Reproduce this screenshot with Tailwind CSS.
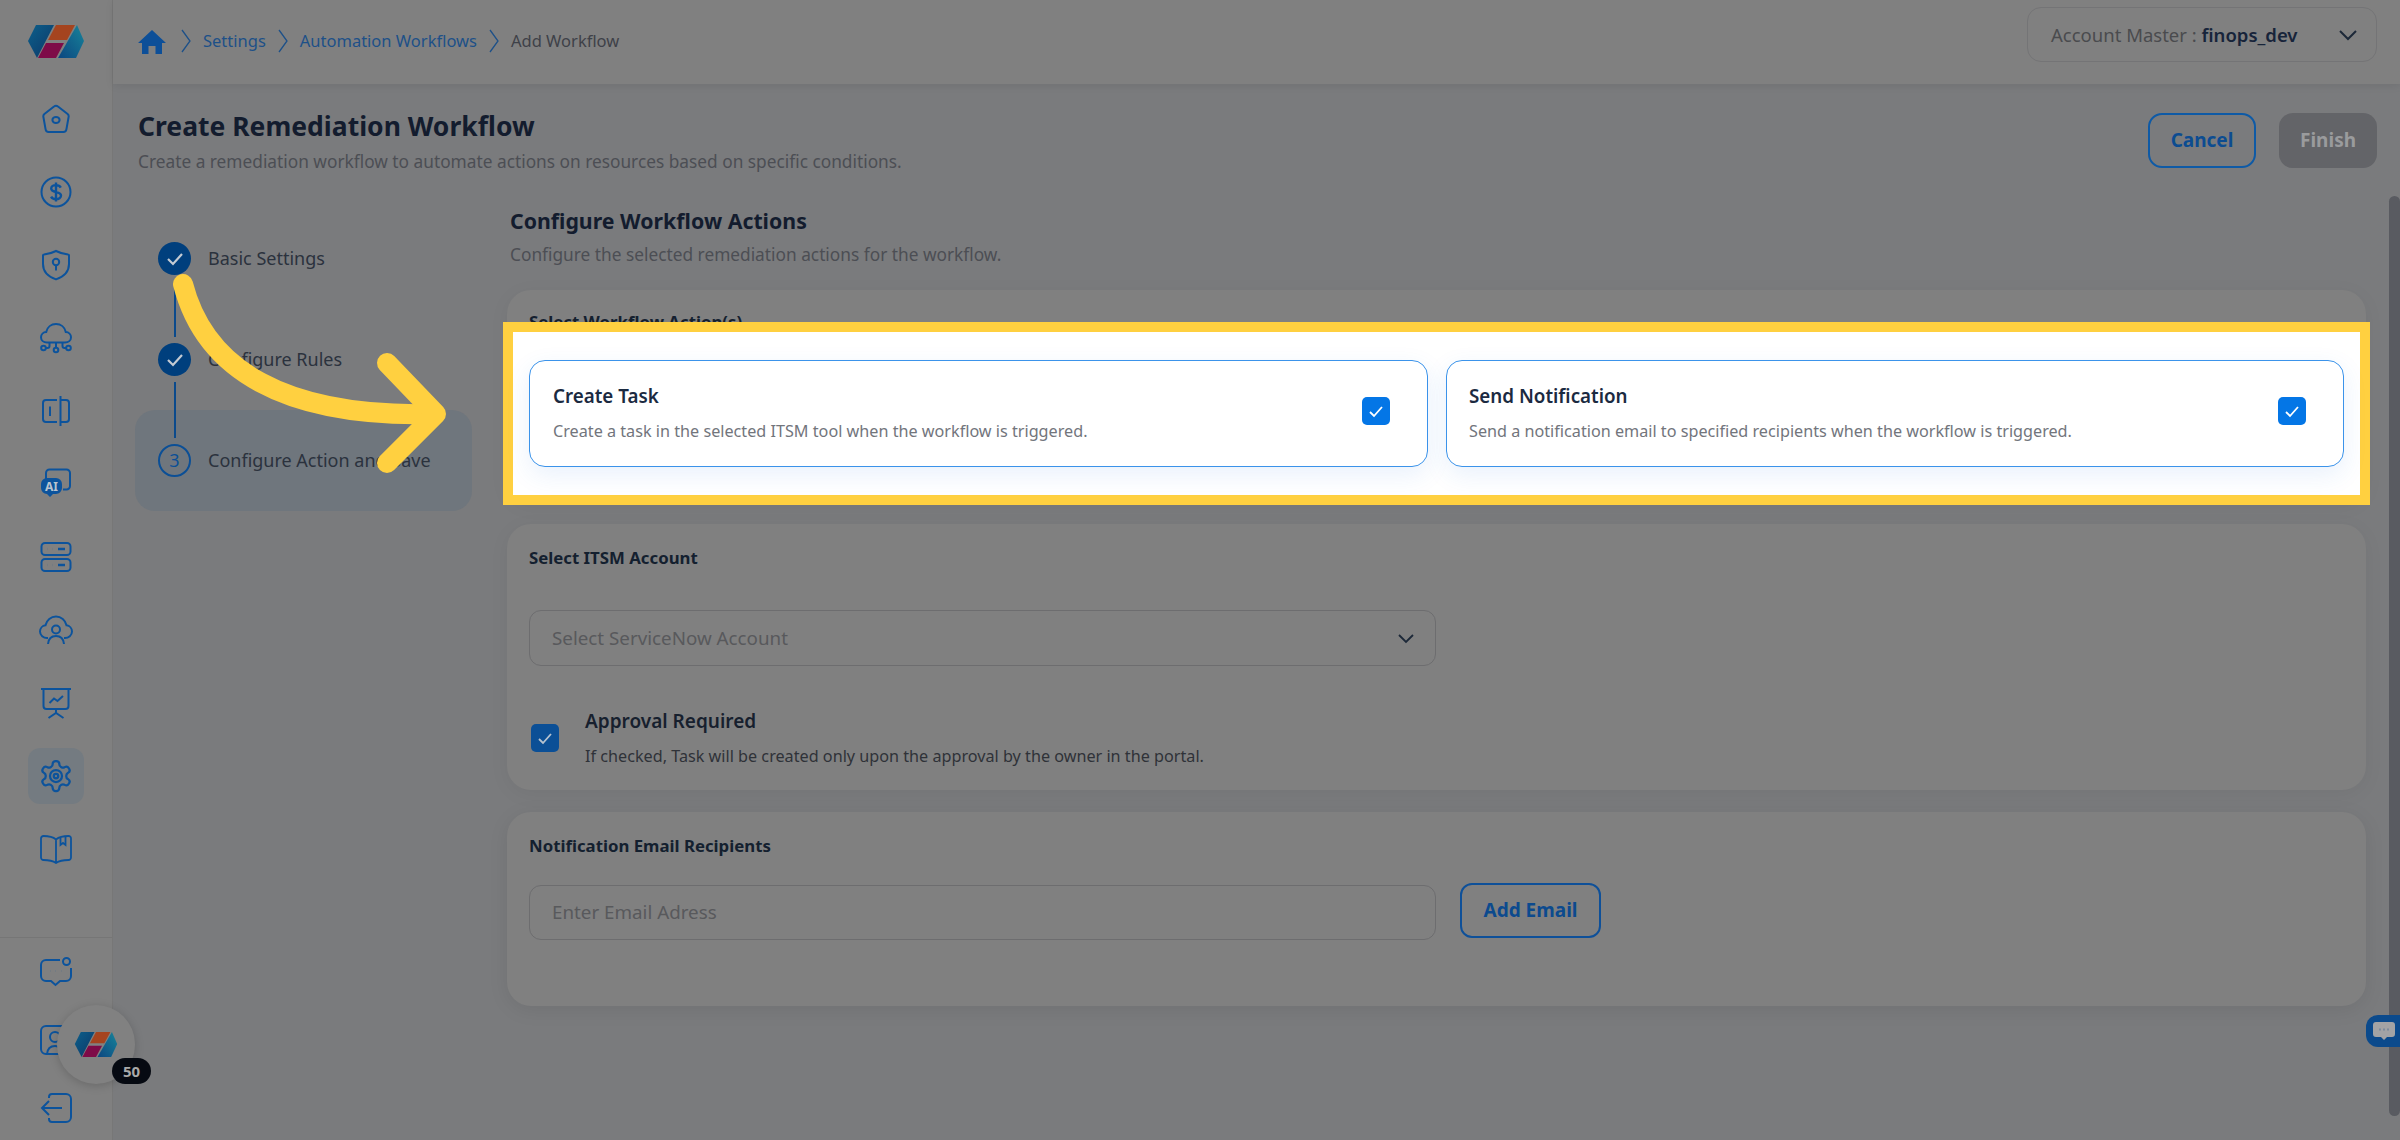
<!DOCTYPE html>
<html lang="en">
<head>
    <meta charset="UTF-8" />
    <title>Create Remediation Workflow</title>
    <script src="https://cdn.jsdelivr.net/npm/@tailwindcss/browser@4"></script>
</head>
<body class="relative flex w-[2400px] h-[1140px] overflow-hidden bg-[#7a7b7d] font-['Noto_Sans',sans-serif] text-[#14202f]">

<!-- Sidebar -->
<aside class="w-[113px] h-[1140px] flex flex-col shrink-0 bg-[#808080] overflow-hidden border-r border-[#777]">
    <div class="h-[82px] shrink-0 flex items-center justify-center">
        <svg class="w-[56px] h-[33px]" viewBox="0 0 56 33">
            <defs>
                <linearGradient id="lg1" x1="0" y1="0" x2="1" y2="1"><stop offset="0" stop-color="#0d5f8a"/><stop offset="1" stop-color="#0b3768"/></linearGradient>
                <linearGradient id="lg2" x1="1" y1="0" x2="0" y2="1"><stop offset="0" stop-color="#17849a"/><stop offset="1" stop-color="#0c4680"/></linearGradient>
            </defs>
            <polygon points="0,16 8,0 26,0 9,33" fill="url(#lg1)"/>
            <polygon points="28,0 47,0 39,15 20,15" fill="#a5441f"/>
            <polygon points="18,18 36,18 28,33 10,33" fill="#7e0b48"/>
            <polygon points="49,0 56,16 48,33 30,33" fill="url(#lg2)"/>
        </svg>
    </div>
    <nav class="flex flex-col text-[#0c539c]">
        <a class="h-[73px] flex items-center justify-center">
            <svg class="w-[32px] h-[32px] mt-[2px]" viewBox="0 0 32 32" fill="none" stroke="currentColor" stroke-width="2"><path d="M14 2.600a3 3 0 0 1 4 0l9.600 7.400a3 3 0 0 1 1 3l-2.200 12.400a3 3 0 0 1-3 2.600H8.600a3 3 0 0 1-3-2.600L3.400 13a3 3 0 0 1 1-3z"/><ellipse cx="16" cy="16" rx="3.600" ry="3"/></svg>
        </a>
        <a class="h-[73px] flex items-center justify-center">
            <svg class="w-[32px] h-[32px]" viewBox="0 0 32 32" fill="none" stroke="currentColor" stroke-width="2"><circle cx="16" cy="16" r="14.500"/><path stroke-width="2.400" d="M20.800 11.600c-.8-1.600-2.600-2.500-4.800-2.500-2.700 0-4.800 1.400-4.800 3.500 0 4.900 9.800 2.100 9.800 7 0 2.100-2.200 3.500-5 3.500-2.200 0-4.100-.9-4.900-2.500M16 6.400v19.200"/></svg>
        </a>
        <a class="h-[73px] flex items-center justify-center">
            <svg class="w-[32px] h-[32px]" viewBox="0 0 32 32" fill="none" stroke="currentColor" stroke-width="2"><path d="M16 2c3.800 2 7.800 3 12 3.400a1 1 0 0 1 1 1V15c0 7.600-5.400 12.800-13 15.400C8.400 27.800 3 22.600 3 15V6.400a1 1 0 0 1 1-1C8.200 5 12.200 4 16 2z"/><circle cx="16" cy="13" r="3.200"/><path d="M16 16.200v5.300"/></svg>
        </a>
        <a class="h-[73px] flex items-center justify-center">
            <svg class="w-[34px] h-[32px]" viewBox="0 0 34 32" fill="none" stroke="currentColor" stroke-width="2"><path d="M8 20.500c-3.400 0-6-2.300-6-5.300 0-2.800 2.300-5 5.200-5.200C8.200 5.200 12.200 2 17 2s8.800 3.200 9.800 8c2.900.2 5.200 2.400 5.200 5.200 0 3-2.600 5.300-6 5.300z"/><path d="M17 20.500v5M10.500 20.500v3.500a2 2 0 0 1-2 2H7M23.500 20.500v3.500a2 2 0 0 0 2 2H27"/><circle cx="17" cy="28" r="2.300"/><circle cx="4.500" cy="26" r="2.300"/><circle cx="29.500" cy="26" r="2.300"/></svg>
        </a>
        <a class="h-[73px] flex items-center justify-center">
            <svg class="w-[32px] h-[32px]" viewBox="0 0 32 32" fill="none" stroke="currentColor" stroke-width="2"><path d="M20.500 1v30"/><path d="M17 5H6a3 3 0 0 0-3 3v16a3 3 0 0 0 3 3h11M20.500 5H26a3 3 0 0 1 3 3v16a3 3 0 0 1-3 3h-5.500"/><path d="M10 11.500v9.500"/></svg>
        </a>
        <a class="h-[73px] flex items-center justify-center">
            <svg class="w-[32px] h-[32px]" viewBox="0 0 32 32" fill="none"><path stroke="currentColor" stroke-width="2" d="M6 11V5a3.500 3.500 0 0 1 3.500-3.500h17A3.500 3.500 0 0 1 30 5v13a3.500 3.500 0 0 1-3.500 3.500H23"/><path fill="currentColor" d="M7 10h9a6 6 0 0 1 6 6v4a6 6 0 0 1-6 6h-3l-3 3-3-3H7a6 6 0 0 1-6-6v-4a6 6 0 0 1 6-6z"/><text x="11.500" y="22.800" text-anchor="middle" font-size="12" font-weight="700" fill="#b9c4cf">AI</text></svg>
        </a>
        <a class="h-[73px] flex items-center justify-center">
            <svg class="w-[32px] h-[32px]" viewBox="0 0 32 32" fill="none" stroke="currentColor" stroke-width="2"><rect x="1.500" y="2" width="29" height="12" rx="3.500"/><rect x="1.500" y="18" width="29" height="12" rx="3.500"/><path stroke-width="2.400" d="M7 8h.1M12 8h.1M18 8h7M7 24h.1M12 24h.1M18 24h7"/></svg>
        </a>
        <a class="h-[73px] flex items-center justify-center">
            <svg class="w-[34px] h-[30px]" viewBox="0 0 34 30" fill="none" stroke="currentColor" stroke-width="2"><path d="M9 23H8c-3.500 0-7-2.700-7-6.500 0-3.300 2.500-5.800 5.500-6.200C7.500 5 12 1.500 17 1.500S26.500 5 27.500 10.300c3 .4 5.500 2.900 5.500 6.200 0 3.800-3.500 6.500-7 6.500h-1"/><circle cx="17" cy="14.500" r="4"/><path d="M9 29c.5-5 3.500-8 8-8s7.500 3 8 8"/></svg>
        </a>
        <a class="h-[73px] flex items-center justify-center">
            <svg class="w-[32px] h-[32px]" viewBox="0 0 32 32" fill="none" stroke="currentColor" stroke-width="2"><path d="M1 2h30M3.500 2v17a3 3 0 0 0 3 3h19a3 3 0 0 0 3-3V2"/><path d="M9.500 16l4.500-4.500 3.500 2.500 5.500-5"/><path d="M16 22v4M8.500 31l7.500-5 7.500 5"/></svg>
        </a>
        <a class="h-[73px] flex items-center justify-center">
            <div class="w-[56px] h-[56px] rounded-[12px] bg-[#747b81] flex items-center justify-center">
                <svg class="w-[36px] h-[36px]" viewBox="0 0 24 24" fill="none" stroke="currentColor" stroke-width="1.500"><path d="M12.220 2h-.44a2 2 0 0 0-2 2v.18a2 2 0 0 1-1 1.730l-.43.25a2 2 0 0 1-2 0l-.15-.08a2 2 0 0 0-2.730.73l-.22.38a2 2 0 0 0 .73 2.730l.15.1a2 2 0 0 1 1 1.720v.51a2 2 0 0 1-1 1.740l-.15.09a2 2 0 0 0-.73 2.730l.22.38a2 2 0 0 0 2.730.73l.15-.08a2 2 0 0 1 2 0l.43.25a2 2 0 0 1 1 1.730V20a2 2 0 0 0 2 2h.44a2 2 0 0 0 2-2v-.18a2 2 0 0 1 1-1.730l.43-.25a2 2 0 0 1 2 0l.15.08a2 2 0 0 0 2.730-.73l.22-.39a2 2 0 0 0-.73-2.730l-.15-.08a2 2 0 0 1-1-1.740v-.5a2 2 0 0 1 1-1.740l.15-.09a2 2 0 0 0 .73-2.730l-.22-.38a2 2 0 0 0-2.730-.73l-.15.08a2 2 0 0 1-2 0l-.43-.25a2 2 0 0 1-1-1.730V4a2 2 0 0 0-2-2z"/><circle cx="12" cy="12" r="4"/><circle cx="12" cy="12" r="1.500"/></svg>
            </div>
        </a>
        <a class="h-[73px] flex items-center justify-center">
            <svg class="w-[32px] h-[30px]" viewBox="0 0 32 30" fill="none" stroke="currentColor" stroke-width="1.800"><path d="M16 5.500C13 3 8 2 3.500 2A2.500 2.500 0 0 0 1 4.500v19A2.500 2.500 0 0 0 3.500 26c4.500 0 9.500 1 12.500 3 3-2 8-3 12.500-3a2.500 2.500 0 0 0 2.500-2.500v-19A2.500 2.500 0 0 0 28.500 2C24 2 19 3 16 5.500zM16 5.500V29"/><path d="M20.500 3.500V11l2.500-2 2.500 2V2.500"/></svg>
        </a>
    </nav>
    <div class="mt-[52px] border-t border-[#767676] flex flex-col text-[#0c539c]">
        <a class="h-[68px] flex items-center justify-center">
            <svg class="w-[32px] h-[30px]" viewBox="0 0 32 30" fill="none" stroke="currentColor" stroke-width="2"><path d="M20 3H6a5 5 0 0 0-5 5v11a5 5 0 0 0 5 5h5l4.500 4 4.500-4h6a5 5 0 0 0 5-5v-8"/><circle cx="26.500" cy="4.500" r="3.500"/><path d="M10 14h.1M15.500 14h.1M21 14h.1"/></svg>
        </a>
        <a class="h-[68px] flex items-center justify-center">
            <svg class="w-[32px] h-[30px]" viewBox="0 0 32 30" fill="none" stroke="currentColor" stroke-width="2"><path d="M27 1H6a5 5 0 0 0-5 5v18a5 5 0 0 0 5 5h21"/><circle cx="15" cy="12" r="5"/><path d="M7 29c.5-5 3.500-8 8-8s7.500 3 8 8"/></svg>
        </a>
        <a class="h-[68px] flex items-center justify-center">
            <svg class="w-[32px] h-[30px]" viewBox="0 0 32 30" fill="none" stroke="currentColor" stroke-width="2"><path d="M9 5V4a3 3 0 0 1 3-3h14a5 5 0 0 1 5 5v18a5 5 0 0 1-5 5H12a3 3 0 0 1-3-3v-1"/><path d="M22 15H2M9 8l-7 7 7 7"/></svg>
        </a>
    </div>
</aside>

<!-- Main -->
<main class="flex-1 flex flex-col min-w-0">
    <header class="h-[84px] shrink-0 bg-[#808080] shadow-[0_2px_8px_rgba(0,0,0,0.08)] flex items-center justify-between pl-[25px] pr-[23px]">
        <div class="flex items-center mb-[2px] text-[16.500px] text-[#1d5088]">
            <svg class="w-[28px] h-[24px] mr-[14px] mt-[2px]" viewBox="0 0 28 24" fill="#0d4f98"><path d="M14 0 28 13h-4v11h-6.500v-8h-7v8H4V13H0z"/></svg>
            <svg class="w-[12px] h-[24px] mr-[11px]" viewBox="0 0 12 24" fill="none" stroke="#1d5088" stroke-width="1.300"><path d="M2 1l8 11-8 11"/></svg>
            <span>Settings</span>
            <svg class="w-[12px] h-[24px] mx-[11px]" viewBox="0 0 12 24" fill="none" stroke="#1d5088" stroke-width="1.300"><path d="M2 1l8 11-8 11"/></svg>
            <span>Automation Workflows</span>
            <svg class="w-[12px] h-[24px] mx-[11px]" viewBox="0 0 12 24" fill="none" stroke="#1d5088" stroke-width="1.300"><path d="M2 1l8 11-8 11"/></svg>
            <span class="text-[#3e4148]">Add Workflow</span>
        </div>
        <div class="w-[350px] h-[55px] mb-[13px] mt-[-2px] rounded-[14px] border border-[#747476] flex items-center justify-between pl-[23px] pr-[18px] text-[18.500px]">
            <div class="text-[#4a4b4e]">Account Master : <span class="font-semibold text-[#17243a]">finops_dev</span></div>
            <svg class="w-[20px] h-[12px]" viewBox="0 0 20 12" fill="none" stroke="#1c2838" stroke-width="2"><path d="M2 2l8 8 8-8"/></svg>
        </div>
    </header>

    <div class="flex items-start justify-between pl-[25px] pr-[23px] pt-[25px] h-[90px] shrink-0">
        <div>
            <h1 class="text-[26.500px] leading-[34px] font-bold text-[#131c2e]">Create Remediation Workflow</h1>
            <p class="mt-[7px] text-[17.300px] leading-[24px] text-[#4c4e54]">Create a remediation workflow to automate actions on resources based on specific conditions.</p>
        </div>
        <div class="flex gap-[23px] mt-[4px]">
            <button class="w-[108px] h-[55px] rounded-[14px] border-2 border-[#0e5aa6] text-[19px] font-bold text-[#0c4c91]">Cancel</button>
            <button class="w-[98px] h-[55px] rounded-[14px] bg-[#636468] text-[19px] font-bold text-[#9a9b9d]">Finish</button>
        </div>
    </div>

    <div class="flex items-start gap-[35px] pl-[22px] pr-[34px] pt-[33px]">
        <!-- Stepper -->
        <div class="w-[337px] shrink-0 mt-[1px] text-[18px] text-[#2b323d]">
            <div class="relative h-[101px] flex items-center gap-[17px] pl-[23px]">
                <div class="w-[33px] h-[33px] rounded-full bg-[#003f7d] flex items-center justify-center">
                    <svg class="w-[18px] h-[14px]" viewBox="0 0 18 14" fill="none" stroke="#c4cbd3" stroke-width="2.200"><path d="M2 7l5 5 9-10"/></svg>
                </div>
                <span>Basic Settings</span>
                <div class="absolute left-[39px] top-[71px] w-[2px] h-[58px] bg-[#0b4a8c]"></div>
            </div>
            <div class="relative h-[101px] flex items-center gap-[17px] pl-[23px]">
                <div class="w-[33px] h-[33px] rounded-full bg-[#003f7d] flex items-center justify-center">
                    <svg class="w-[18px] h-[14px]" viewBox="0 0 18 14" fill="none" stroke="#c4cbd3" stroke-width="2.200"><path d="M2 7l5 5 9-10"/></svg>
                </div>
                <span>Configure Rules</span>
                <div class="absolute left-[39px] top-[73px] w-[2px] h-[56px] bg-[#0b4a8c]"></div>
            </div>
            <div class="h-[101px] flex items-center gap-[17px] pl-[23px] rounded-[20px] bg-[#6f767d]">
                <div class="w-[33px] h-[33px] rounded-full border-2 border-[#0b4f96] flex items-center justify-center text-[#0b4f96] text-[18px]">3</div>
                <span>Configure Action and Save</span>
            </div>
        </div>

        <!-- Panels -->
        <div class="flex-1 min-w-0">
            <h2 class="pl-[3px] text-[21.300px] leading-[28px] font-bold text-[#131c2e]">Configure Workflow Actions</h2>
            <p class="pl-[3px] mt-[8px] text-[17.300px] leading-[24px] text-[#4c4e54]">Configure the selected remediation actions for the workflow.</p>

            <section class="mt-[23px] h-[212px] rounded-[24px] bg-[#808080] pl-[22px] pt-[21px] shadow-[0_4px_20px_rgba(0,0,0,0.05)]">
                <h3 class="text-[16.800px] leading-[22px] font-bold">Select Workflow Action(s)</h3>
            </section>

            <section class="mt-[22px] h-[266px] rounded-[24px] bg-[#808080] pl-[22px] pt-[23px] shadow-[0_4px_20px_rgba(0,0,0,0.05)]">
                <h3 class="text-[16.800px] leading-[22px] font-bold">Select ITSM Account</h3>
                <div class="mt-[41px] w-[907px] h-[56px] rounded-[12px] border border-[#6d6d6f] flex items-center justify-between pl-[22px] pr-[20px] text-[18.800px] text-[#58595c]">
                    <span>Select ServiceNow Account</span>
                    <svg class="w-[18px] h-[11px]" viewBox="0 0 18 11" fill="none" stroke="#1c2838" stroke-width="1.800"><path d="M2 2l7 7 7-7"/></svg>
                </div>
                <div class="mt-[43px] ml-[2px] flex items-start gap-[26px]">
                    <div class="mt-[15px] w-[28px] h-[28px] rounded-[5px] bg-[#0b4f96] flex items-center justify-center">
                        <svg class="w-[16px] h-[13px]" viewBox="0 0 16 13" fill="none" stroke="#b7c3cf" stroke-width="1.800"><path d="M2 7l4 4 8-9"/></svg>
                    </div>
                    <div>
                        <div class="text-[19px] leading-[24px] font-semibold text-[#17202e]">Approval Required</div>
                        <div class="mt-[11px] text-[16.200px] leading-[24px] text-[#2f3238]">If checked, Task will be created only upon the approval by the owner in the portal.</div>
                    </div>
                </div>
            </section>

            <section class="mt-[22px] h-[194px] rounded-[24px] bg-[#808080] pl-[22px] pt-[23px] shadow-[0_4px_20px_rgba(0,0,0,0.08)]">
                <h3 class="text-[16.800px] leading-[22px] font-bold">Notification Email Recipients</h3>
                <div class="mt-[26px] flex items-start gap-[24px]">
                    <div class="mt-[2px] w-[907px] h-[55px] rounded-[12px] border border-[#6d6d6f] flex items-center pl-[22px] text-[18.800px] text-[#58595c]">Enter Email Adress</div>
                    <button class="w-[141px] h-[55px] rounded-[12px] border-2 border-[#0e5099] text-[19px] font-bold text-[#0c4a8e]">Add Email</button>
                </div>
            </section>
        </div>
    </div>
</main>

<!-- Scrollbar -->
<div class="absolute left-[2389px] top-[196px] w-[11px] h-[920px] rounded-t-[6px] rounded-b-[6px] bg-[#595b61]"></div>

<!-- Chat tab -->
<div class="absolute left-[2366px] top-[1015px] w-[34px] h-[32px] rounded-l-[12px] bg-[#0b4a8c] flex items-center justify-center pl-[2px]">
    <svg class="w-[24px] h-[20px]" viewBox="0 0 24 20" fill="#a2a3a5"><path d="M4 1h16a3 3 0 0 1 3 3v9a3 3 0 0 1-3 3h-5l-3 3-3-3H4a3 3 0 0 1-3-3V4a3 3 0 0 1 3-3z"/><path fill="#7b8a9c" d="M7 7.500h2v2H7zM11 7.500h2v2h-2zM15 7.500h2v2h-2z"/></svg>
</div>

<!-- Guide highlight -->
<div class="absolute left-[503px] top-[322px] w-[1867px] h-[183px] border-[10px] border-[#ffd040] bg-white flex gap-[18px] px-[16px] pt-[28px]">
    <div class="flex-1 h-[107px] rounded-[16px] border-[1.500px] border-[#3b93ea] bg-white shadow-[0_8px_24px_rgba(40,120,230,0.10)] flex justify-between pl-[23px] pr-[37px]">
        <div>
            <div class="mt-[23px] text-[18.800px] leading-[24px] font-semibold text-[#1b2a41]">Create Task</div>
            <div class="mt-[11px] text-[16.200px] leading-[24px] text-[#72757c]">Create a task in the selected ITSM tool when the workflow is triggered.</div>
        </div>
        <div class="mt-[36px] w-[28px] h-[28px] rounded-[5px] bg-[#0476e6] flex items-center justify-center">
            <svg class="w-[16px] h-[13px]" viewBox="0 0 16 13" fill="none" stroke="#fff" stroke-width="1.800"><path d="M2 7l4 4 8-9"/></svg>
        </div>
    </div>
    <div class="flex-1 h-[107px] rounded-[16px] border-[1.500px] border-[#3b93ea] bg-white shadow-[0_8px_24px_rgba(40,120,230,0.10)] flex justify-between pl-[22px] pr-[37px]">
        <div>
            <div class="mt-[23px] text-[18.800px] leading-[24px] font-semibold text-[#1b2a41]">Send Notification</div>
            <div class="mt-[11px] text-[16.200px] leading-[24px] text-[#72757c]">Send a notification email to specified recipients when the workflow is triggered.</div>
        </div>
        <div class="mt-[36px] w-[28px] h-[28px] rounded-[5px] bg-[#0476e6] flex items-center justify-center">
            <svg class="w-[16px] h-[13px]" viewBox="0 0 16 13" fill="none" stroke="#fff" stroke-width="1.800"><path d="M2 7l4 4 8-9"/></svg>
        </div>
    </div>
</div>

<!-- Guide arrow -->
<svg class="absolute left-0 top-0 w-[600px] h-[520px] pointer-events-none" viewBox="0 0 600 520" fill="none" stroke="#ffd040" stroke-width="20" stroke-linecap="round" stroke-linejoin="round">
    <path d="M183 284C205 370 285 417 430 414"/>
    <path d="M387 363 436 414 387 463"/>
</svg>

<!-- Floating launcher -->
<div class="absolute left-[57px] top-[1005px] w-[78px] h-[79px] rounded-full bg-[#818181] shadow-[0_2px_10px_rgba(0,0,0,0.18)] flex items-center justify-center">
    <svg class="w-[44px] h-[25px] mt-[-1px]" viewBox="0 0 56 33">
        <polygon points="0,16 8,0 26,0 9,33" fill="url(#lg1)"/>
        <polygon points="28,0 47,0 39,15 20,15" fill="#a5441f"/>
        <polygon points="18,18 36,18 28,33 10,33" fill="#7e0b48"/>
        <polygon points="49,0 56,16 48,33 30,33" fill="url(#lg2)"/>
    </svg>
    <div class="absolute left-[55px] top-[53px] w-[39px] h-[26px] rounded-full bg-[#060a12] flex items-center justify-center text-[15px] font-bold text-[#a9a9a9]">50</div>
</div>

</body>
</html>
